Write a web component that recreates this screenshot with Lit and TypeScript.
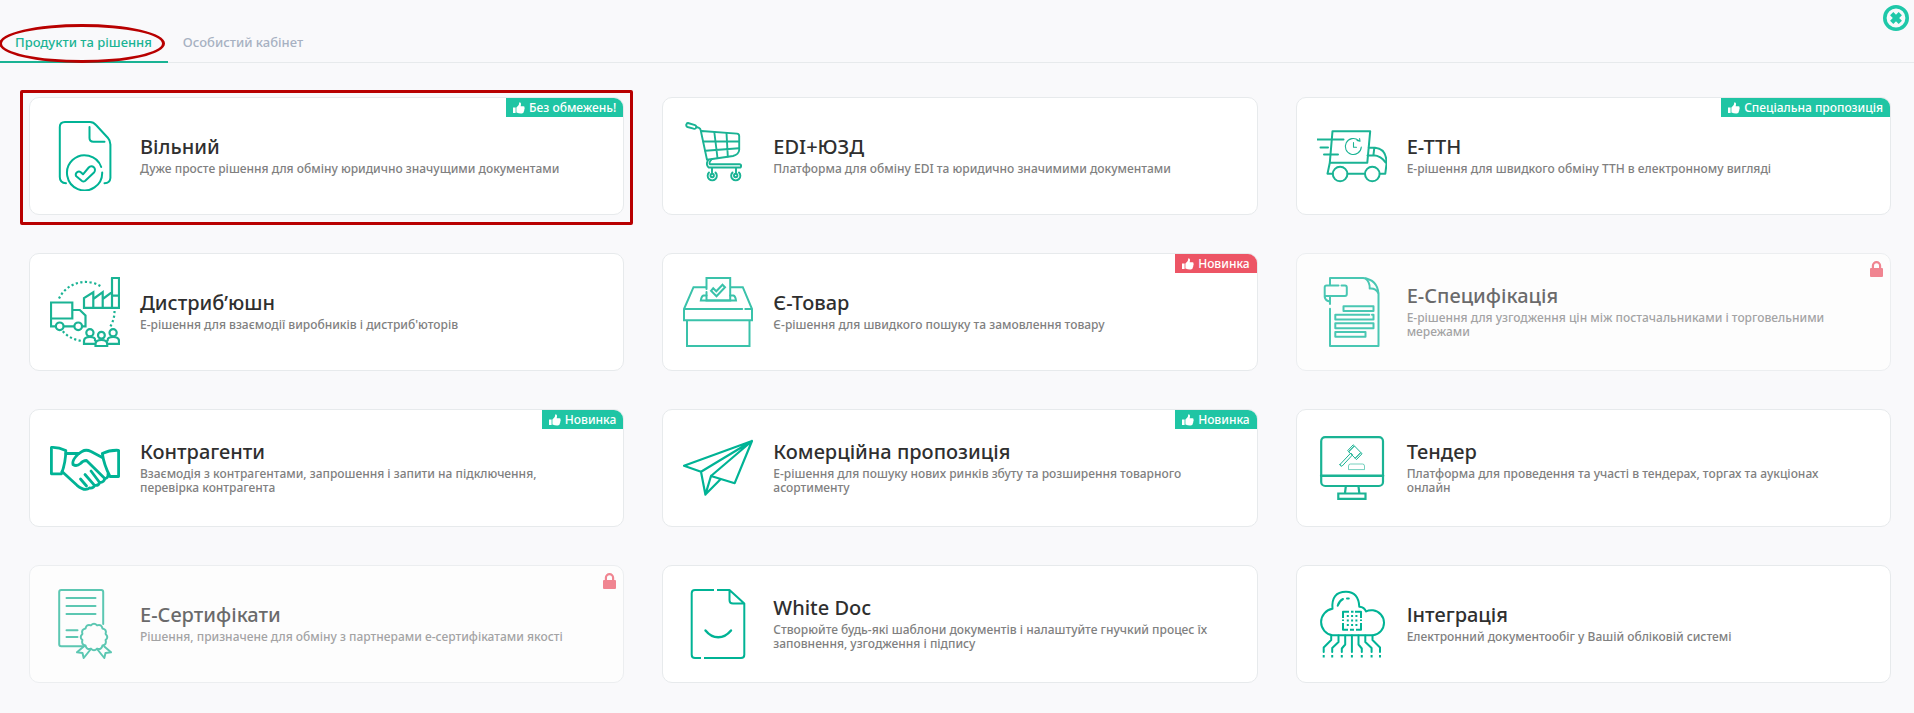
import { LitElement, html, svg, css, nothing, SVGTemplateResult } from "lit";
import { customElement, property, state } from "lit/decorators.js";
import { classMap } from "lit/directives/class-map.js";

interface Product {
  icon: string;
  title: string;
  text: string;
  badge?: string;
  tone?: "green" | "red";
  locked?: boolean;
  marked?: boolean;
}

const PRODUCTS: Product[] = [
  { icon: "free", title: "Вільний", text: "Дуже просте рішення для обміну юридично значущими документами", badge: "Без обмежень!", tone: "green", marked: true },
  { icon: "cart", title: "EDI+ЮЗД", text: "Платформа для обміну EDI та юридично значимими документами" },
  { icon: "truck", title: "Е-ТТН", text: "Е-рішення для швидкого обміну ТТН в електронному вигляді", badge: "Спеціальна пропозиція", tone: "green" },
  { icon: "distribution", title: "Дистриб’юшн", text: "Е-рішення для взаємодії виробників і дистриб'юторів" },
  { icon: "box", title: "Є-Товар", text: "Є-рішення для швидкого пошуку та замовлення товару", badge: "Новинка", tone: "red" },
  { icon: "spec", title: "Е-Специфікація", text: "Е-рішення для узгодження цін між постачальниками і торговельними мережами", locked: true },
  { icon: "hands", title: "Контрагенти", text: "Взаємодія з контрагентами, запрошення і запити на підключення, перевірка контрагента", badge: "Новинка", tone: "green" },
  { icon: "plane", title: "Комерційна пропозиція", text: "Е-рішення для пошуку нових ринків збуту та розширення товарного асортименту", badge: "Новинка", tone: "green" },
  { icon: "monitor", title: "Тендер", text: "Платформа для проведення та участі в тендерах, торгах та аукціонах онлайн" },
  { icon: "certificate", title: "Е-Сертифікати", text: "Рішення, призначене для обміну з партнерами е-сертифікатами якості", locked: true },
  { icon: "whitedoc", title: "White Doc", text: "Створюйте будь-які шаблони документів і налаштуйте гнучкий процес їх заповнення, узгодження і підпису" },
  { icon: "cloud", title: "Інтеграція", text: "Електронний документообіг у Вашій обліковій системі" },
];

/* Wavy edge of the certificate seal: twelve shallow scallops. */
const sealPath = (() => {
  const n = 12;
  const at = (i: number, r: number) => {
    const a = (i / n) * Math.PI * 2 - Math.PI / 2 + Math.PI / n;
    return `${(44 + r * Math.cos(a)).toFixed(1)} ${(48 + r * Math.sin(a)).toFixed(1)}`;
  };
  let d = `M${at(0, 12)}`;
  for (let i = 0; i < n; i++) d += `Q${at(i + 0.5, 15)} ${at(i + 1, 12)}`;
  return d + "Z";
})();

const ICONS: Record<string, SVGTemplateResult> = {
  free: svg`<g stroke="#00b395" stroke-width="2">
    <path d="M16 62.3C12 62 9.8 60 9.8 56V6Q9.800 1 15 1H40Q43.500 1 46 4L58 17Q60.400 19.600 60.400 23.500V57Q60 62 54.500 62.300"/>
    <path d="M39.500 6V17Q39.500 20.800 43.500 20.800H54.500"/>
    <path d="M51.200 46A17.600 17.600 0 1 0 52.200 51.500"/>
    <path d="M26 55A3.200 3.200 0 0 1 30.800 51.200L33 53.300L38.700 46.500A3.600 3.600 0 0 1 44 51.500L35 60Q33.400 61 32 60Z"/></g>`,
  cart: svg`<g stroke="#1ab394" stroke-width="1.900">
    <path d="M5 2L12 4.200Q14 5 13 7Q12.500 8.200 10.500 7.700L4.500 6Q2.800 5.300 3.400 3.400Q3.800 1.800 5 2Z"/>
    <path d="M13.500 6L16 6.800Q17.500 7.400 17.800 9.700L24 38.800L50 35Q55.800 33.500 56.200 29V15Q56.200 12.800 54 12.600L18.500 10"/>
    <path d="M31.300 11L34.500 37M43.500 12L44.800 35.500M20.300 20.500H56M22.300 29.700L56 27.300"/>
    <path d="M25 39.500Q22.500 43 25.500 46.500H56.500A1.600 1.600 0 0 0 56.500 43.300H27Q25.500 42 28.500 38.500"/>
    <path d="M29 47V51.500M53 47V51.500M26 51.500A4.600 4.600 0 1 0 32.500 51.500M49.500 51.500A4.600 4.600 0 1 0 56 51.500"/>
    <circle cx="29.200" cy="54.500" r="1.700"/><circle cx="52.700" cy="54.500" r="1.700"/></g>`,
  truck: svg`<g stroke="#1ab394" stroke-width="2">
    <path d="M15.500 10.200H53.200L50.300 41.700H12.800ZM12.800 41.700L10.500 52.700H15.700M30.600 52.700H47.500M62.800 52.700H68.300L69.600 42.500Q69.500 27.500 58 26.700H51.500M57.300 27L56.400 34.300Q64 34.600 69 42M50.500 34.400H56.500"/>
    <circle cx="23.100" cy="53" r="7.300"/><circle cx="55.300" cy="53" r="7.300"/>
    <path d="M0 18.400H26.500M3.500 26.400H11M7 33.500H21"/>
    <path stroke-width="1.100" d="M41.500 19.400A8 8 0 1 0 44.300 26M40 19.500L43 20.300L42.600 17.500M36.500 21.500V26.300H39.500"/></g>`,
  distribution: svg`<g stroke="#1ab394" stroke-width="2.200" stroke-linejoin="miter">
    <path d="M62 1H69V30.800H34V21L43.300 15.200V30M43.300 22L52.700 15.200V30M52.700 22L62 15.200V30.800M62 1V16M62 18.700H69"/>
    <path d="M1 25.500H22.300V41.500H1ZM1 41.500V49.300H5.500M14 49.300H23.800M32.500 49.300H35.500V38.500L29.800 33H22.300"/>
    <circle cx="9.700" cy="49.300" r="3.800"/><circle cx="28.200" cy="49.300" r="3.800"/>
    <circle cx="39.900" cy="55.800" r="3.600"/><circle cx="63.100" cy="55.800" r="3.600"/><circle cx="51.400" cy="58.300" r="3.400"/>
    <path d="M44.500 66.900H34V64Q34 60 39.900 60T45 63.500M58 66.900H69V64Q69 60 63.100 60T57.700 63.500M45.500 69.200H57.200V67Q57.200 63 51.400 63T45.500 67Z"/>
    <path stroke-width="2.200" stroke-linecap="butt" stroke-dasharray="2.200 2.400" d="M9 21.500A29.500 29.500 0 0 1 52 10M64.500 34A29.500 29.500 0 0 1 60 50M12.800 54.300A29.500 29.500 0 0 0 31 63.800"/></g>`,
  box: svg`<g stroke="#3ac2aa" stroke-width="2" stroke-linejoin="miter">
    <path d="M23.500 12V1H47.200V23.500H23.500V15M23.500 10.200H10.500L1 32V43.300H69V32L59.800 10.200H47.200M1 32H59.200M62.300 32H69M4 43.300V69H66.500V43.300"/>
    <path d="M23.500 18.500H20.500Q18.500 19 17.800 23.600H53Q52.400 19 50.400 18.500H47.200"/>
    <path d="M28 13.800L30.200 11.300L33.300 14.300L39.500 7.700L42 10.200L33.500 19.200Z"/></g>`,
  spec: svg`<g stroke="#00b395" stroke-width="2">
    <path d="M13 8V1H46Q60.500 2.500 61.500 17V69H13V31.800M13 27V19.500"/>
    <path d="M48.500 1.500Q53 5 52.700 11.500Q58.500 10.800 61.300 16"/>
    <path d="M21.500 8.500H9.500Q7.700 8.500 7.700 10.500V20Q8.500 24 13 24.500M24.500 8.500H28Q29.800 8.500 29.800 10.500V17Q29.800 18.900 28 18.900H9.500Q7.700 19 8 21"/>
    <path d="M26.500 29.200H56.500V34H26.500ZM52.300 37.700H18.300V42.500H56.500V37.700H55M18.300 46.300H56.500V51.200H18.300ZM18.300 54.900H48.500V59.700H18.300Z"/></g>`,
  hands: svg`<g stroke="#00b395" stroke-width="2.800">
    <path d="M1.400 14.500Q8 14 15.800 17.500Q15.800 29 11.500 40.800H1.400ZM68.600 17.300Q60 16.800 52.300 20.500Q54 32 60 43.500H68.600Z"/>
    <path d="M16 20.500H29M12 38.500L27 52.300Q35 58.800 39.500 55Q43.500 55.500 44.500 52.300Q48.500 53 49.600 49.500Q54 49.500 54.800 45.500Q58.500 45 58 41"/>
    <path d="M52.300 24.500L41 18.500Q36 16 32 18.500Q28 20.500 25.500 24Q22 28.500 23 31.500Q26.500 34 30.500 30.500Q33 27.500 36.500 27.500L54.800 45.500M30.500 46L36.500 53M35 41.500L44.500 52.300M41 38L49.600 49.500"/></g>`,
  plane: svg`<g stroke="#00b395" stroke-width="2.200">
    <path d="M69 8L1 32.700L18 38.800ZM18 38.800L22.400 61.600L28 43L69 8M22.400 61.600L37.300 46.500M28 43L51.700 50.200L69 8"/></g>`,
  monitor: svg`<g stroke="#1ab394" stroke-width="2.200">
    <rect x="4.200" y="4.200" width="61.800" height="48.800" rx="4"/>
    <path stroke-width="2.600" d="M4.200 42.700H66"/>
    <path stroke-linejoin="miter" d="M28.800 53.500L28 60M41.500 53.500L42.300 60M21.300 60.500H48.500V65.800H21.300Z"/>
    <g stroke-width="1"><path d="M23 31.500L33.800 20L35.600 21.800L25 33.200Q23 33.500 23 31.500ZM32 18.500L37.500 13L43.800 19.500L38.500 25ZM31 17.300L36.200 11.800L37.300 12.900L32 18.400ZM38.500 25L43.800 19.600L45 20.800L39.700 26.300Z"/>
    <path d="M31.500 36.200V33Q31.500 31 33.500 31H45.500Q47.500 31 47.500 33V36.200Z" opacity="0.600"/></g></g>`,
  certificate: svg`<g stroke="#1ab394" stroke-width="2">
    <path d="M53.200 35V3Q53.200 1 51.200 1H11.200Q9.200 1 9.200 3V55.300Q9.200 57.300 11.200 57.300H34"/>
    <path d="M16.500 9H45.500M16.500 17H45.500M16.500 25H45.500M16.500 41.200H27.500M16.500 48H27.500"/>
    <path d=${sealPath}/>
    <path d="M33.700 57.500L27 63.300L32.500 64L33.700 69L40.500 60.500M54.300 57.500L61 63.300L55.500 64L54.300 69L47.500 60.500"/></g>`,
  whitedoc: svg`<g stroke="#00b395" stroke-width="2" stroke-linecap="butt">
    <path d="M31 1H12Q8.700 1 8.700 4.300V65.700Q8.700 69 12 69H18M21 69H58Q61.300 69 61.300 65.700V14.500L46.500 1H34M46.500 1V11Q46.500 14.500 50 14.500H61.300"/>
    <path stroke-width="2.400" stroke-linecap="round" d="M22.500 41.500Q28 48.300 35.200 48.300T48 41.500"/></g>`,
  cloud: svg`<g stroke="#00b395" stroke-width="2">
    <path d="M15.500 46.300A13.400 13.400 0 0 1 15.500 19.800Q14 2.800 29 2.800Q41.500 3 42.300 17.700Q47.500 18 49 22.500Q52 20.800 56 21.300A12.600 12.600 0 0 1 56 46.300Z"/>
    <path d="M20.700 16.700Q22 12 26 10M30 9.400H31.800"/>
    <path d="M14.200 46.500V51L6.700 58.500V63M21.500 46.500V53L15.200 59V63M28.200 46.500V55.500L24.800 59.500V63M34.900 46.500V63M41.500 46.500V55.500L44.800 59.500V63M48.300 46.500V53L54.600 59V63M55.500 46.500V51L63 58.500V63"/>
    <path stroke-linecap="butt" d="M6.700 66V68.500M15.200 66V68.500M24.800 66V68.500M34.900 66V68.500M44.800 66V68.500M54.600 66V68.500M63 66V68.500"/>
    <path stroke-linecap="butt" d="M32 22.700H26V29M38 22.700H44V29M26 34V40.700H31M44 34V40.700H39M34 22.700H36.500M33 40.700H37M26 30.500V32M44 30.500V32"/>
    <path stroke-linecap="butt" stroke-dasharray="2 2.300" d="M29.800 27H41M29.800 31.500H41M29.800 36H41"/></g>`,
};

@customElement("product-card")
class ProductCard extends LitElement {
  @property({ attribute: false }) product!: Product;

  static styles = css`
    :host { display: block; position: relative; }
    .card {
      box-sizing: border-box;
      height: 100%;
      display: flex;
      align-items: center;
      gap: 20px;
      padding: 23px 40px 23px 20px;
      border: 1px solid #e7eaec;
      border-radius: 10px;
      background: #fff;
      color: inherit;
      text-decoration: none;
      position: relative;
      overflow: hidden;
    }
    .locked { opacity: 0.7; }
    .icon { flex: none; width: 70px; height: 70px; fill: none; stroke-linecap: round; stroke-linejoin: round; }
    .title { margin: 0 0 4px; font-size: 20px; line-height: 22px; font-weight: 500; color: #2f2f2f; }
    .text { margin: 0; font-size: 12px; line-height: 14px; font-weight: 500; color: #808080; }
    .badge {
      position: absolute;
      top: 0;
      right: 0;
      display: flex;
      align-items: center;
      gap: 4px;
      padding: 0 7px;
      font-size: 12px;
      line-height: 19px;
      font-weight: 500;
      color: #fff;
    }
    .green { background: #1fc5a4; }
    .red { background: #ed5565; }
    .thumb { width: 12px; height: 12px; fill: currentColor; }
    .lock { position: absolute; top: 7px; right: 7px; width: 13px; height: 16px; fill: #ed5565; }
    .frame {
      position: absolute;
      inset: -7px -9px -10px -9px;
      border: 3px solid #b80000;
      border-radius: 2px;
      pointer-events: none;
    }
  `;

  render() {
    const p = this.product;
    return html`
      <a class=${classMap({ card: true, locked: !!p.locked })} href="#">
        <svg class="icon" viewBox="0 0 70 70" aria-hidden="true">${ICONS[p.icon]}</svg>
        <div>
          <h2 class="title">${p.title}</h2>
          <p class="text">${p.text}</p>
        </div>
        ${p.badge
          ? html`<span class=${classMap({ badge: true, green: p.tone === "green", red: p.tone === "red" })}>
              <svg class="thumb" viewBox="0 0 12 12" aria-hidden="true">
                <path d="M0 5.500H2.600V11H0ZM3.400 5.500L5.500 3.200Q6 2.500 6.100 1.200Q6.300 0 7.300.400Q8.700 1.200 7.700 4.200H10.600Q12 4.500 11.500 5.800Q12 6.600 11.300 7.500Q11.600 8.400 10.900 9.100Q11 11.500 8.500 11.500Q6 11.600 3.400 10.600Z"/>
              </svg>${p.badge}</span>`
          : nothing}
        ${p.locked
          ? html`<svg class="lock" viewBox="0 0 13 16" aria-hidden="true">
              <path d="M1.800 7V4.700A4.700 4.700 0 0 1 11.200 4.700V7H12Q13 7 13 8V15Q13 16 12 16H1Q0 16 0 15V8Q0 7 1 7ZM4 7H9V4.700A2.500 2.500 0 0 0 4 4.700Z"/>
            </svg>`
          : nothing}
      </a>
      ${p.marked ? html`<div class="frame"></div>` : nothing}
    `;
  }
}

@customElement("app-root")
class AppRoot extends LitElement {
  @state() private active = 0;

  static styles = css`
    :host {
      display: block;
      min-height: 100vh;
      box-sizing: border-box;
      background: #f9f9fb;
      font-family: "Noto Sans", "Open Sans", sans-serif;
      position: relative;
    }
    .tabs { display: flex; padding-top: 23px; border-bottom: 1px solid #e7eaec; }
    .tab {
      position: relative;
      margin: 0 0 -1px;
      padding: 10px 16px 9px 15px;
      border: 0;
      border-bottom: 2px solid transparent;
      background: none;
      font: 500 13px/19px "Noto Sans", "Open Sans", sans-serif;
      color: #a7b1c2;
      cursor: pointer;
    }
    .active { border-bottom-color: #1ab394; color: #1ab394; }
    .oval {
      position: absolute;
      inset: 1px 3px -2px -1px;
      border: 3px solid #b80000;
      border-radius: 50%;
      pointer-events: none;
    }
    .close {
      position: absolute;
      top: 5px;
      right: 5px;
      width: 26px;
      height: 26px;
      padding: 0;
      border: 0;
      background: none;
      cursor: pointer;
    }
    .cross { display: block; width: 26px; height: 26px; fill: none; stroke: #1fc8a9; }
    .grid {
      display: grid;
      grid-template-columns: repeat(3, minmax(0, 1fr));
      gap: 38px;
      padding: 34px 23px 30px 29px;
    }
  `;

  render() {
    const tabs = ["Продукти та рішення", "Особистий кабінет"];
    return html`
      <div class="tabs" role="tablist">
        ${tabs.map(
          (label, i) => html`<button
            class=${classMap({ tab: true, active: i === this.active })}
            role="tab"
            aria-selected=${i === this.active ? "true" : "false"}
            @click=${() => (this.active = i)}
          >${label}${i === 0 ? html`<span class="oval"></span>` : nothing}</button>`
        )}
      </div>
      <button class="close" aria-label="Закрити">
        <svg class="cross" viewBox="0 0 26 26" aria-hidden="true">
          <circle cx="13" cy="13" r="11.200" stroke-width="3.600"/>
          <path stroke-width="4.600" d="M8.700 8.700L17.300 17.300M17.300 8.700L8.700 17.300"/>
        </svg>
      </button>
      <main class="grid">
        ${PRODUCTS.map((p) => html`<product-card .product=${p}></product-card>`)}
      </main>
    `;
  }
}
